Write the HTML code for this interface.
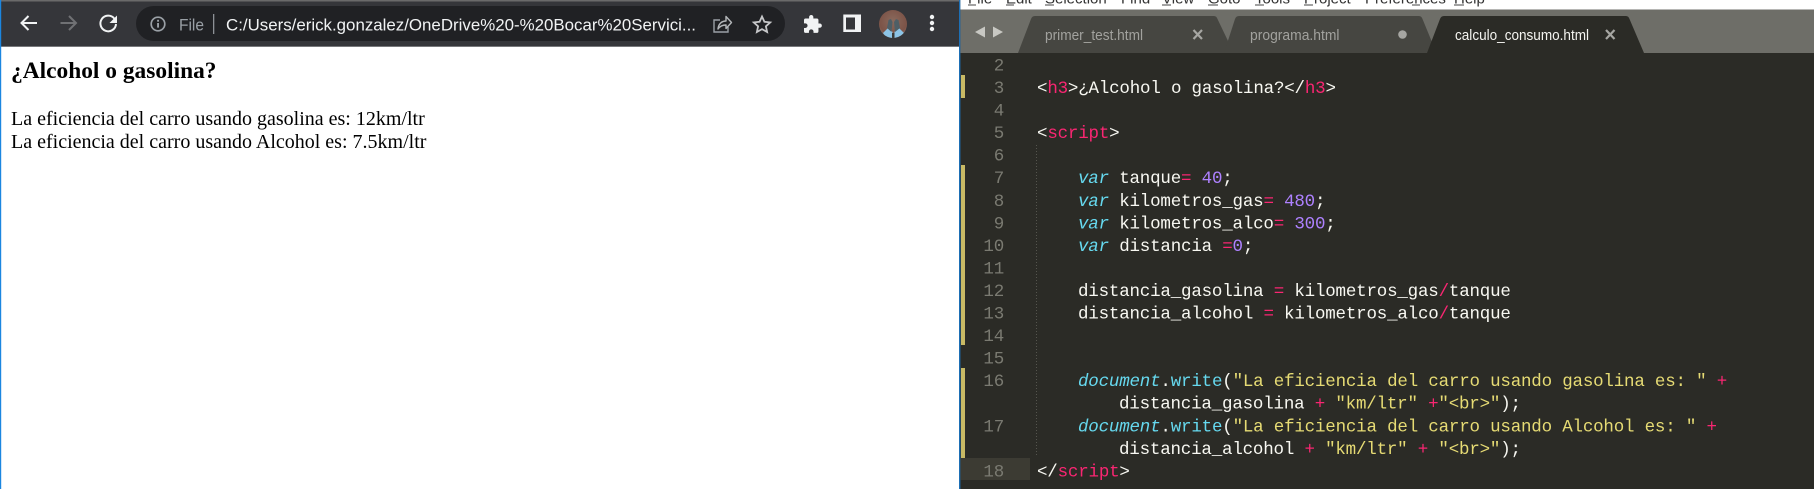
<!DOCTYPE html>
<html><head><meta charset="utf-8"><title>Alcohol o gasolina</title>
<style>
html,body{margin:0;padding:0;width:1814px;height:489px;overflow:hidden;background:#fff}
svg{display:block;position:absolute;left:0;top:0}
text{white-space:pre}
.ui{font-family:"Liberation Sans",sans-serif}
.serif{font-family:"Liberation Serif",serif;fill:#000}
.code{font-family:"Liberation Mono",monospace;font-size:17.5px;letter-spacing:-.2px;fill:#f8f8f2}
.num{font-family:"Liberation Mono",monospace;font-size:17.5px;letter-spacing:-.2px;fill:#7a7a71;text-anchor:end}
.p{fill:#f92672}.k{fill:#66d9ef;font-style:italic}.f{fill:#66d9ef}.n{fill:#ae81ff}.s{fill:#e6db74}
.menu{font-size:15px;fill:#333}
</style></head>
<body>
<svg width="1814" height="489" viewBox="0 0 1814 489" xmlns="http://www.w3.org/2000/svg">
<!-- Chrome window -->
<rect x="0" y="0" width="960" height="489" fill="#fff"/>
<rect x="0" y="0" width="960" height="47" fill="#35363a"/>
<rect x="0" y="0" width="960" height="1.5" fill="#6a6a6a"/>
<rect x="0" y="46" width="960" height="1" fill="#77787b"/>
<rect x="0" y="0" width="1.2" height="489" fill="#1b86e0"/>
<path d="M37 23H21.5M28.5 16L21.500 23l7 7" fill="none" stroke="#f1f3f4" stroke-width="2"/>
<path d="M60.5 23H76M69 16l7 7-7 7" fill="none" stroke="#707174" stroke-width="2"/>
<path d="M114.3 18.6A7.8 7.8 0 1 0 116 24" fill="none" stroke="#f1f3f4" stroke-width="2"/>
<path d="M117 15.5v7.5h-7.5z" fill="#f1f3f4"/>
<rect x="136" y="6" width="649" height="35" rx="17.5" fill="#202124"/>
<circle cx="158" cy="24" r="6.8" fill="none" stroke="#9aa0a6" stroke-width="1.7"/>
<rect x="157.1" y="23" width="1.9" height="4.6" fill="#9aa0a6"/><rect x="157.1" y="19.8" width="1.9" height="1.9" fill="#9aa0a6"/>
<text class="ui" x="179" y="30.5" font-size="16.5" fill="#9aa0a6" textLength="25" lengthAdjust="spacingAndGlyphs">File</text>
<rect x="213" y="14" width="1.3" height="20" fill="#8d9196"/>
<text class="ui" x="226" y="30.5" font-size="16.5" fill="#f1f3f4" textLength="470" lengthAdjust="spacingAndGlyphs">C:/Users/erick.gonzalez/OneDrive%20-%20Bocar%20Servici...</text>
<path d="M720 20h-6v12h14v-5" fill="none" stroke="#9aa0a6" stroke-width="1.4"/>
<path d="M718 29c.5-5 3.5-8 8-8v-4.500l5.500 6-5.500 6v-3.500c-3 0-6 1-8 4z" fill="none" stroke="#b4b7ba" stroke-width="1.4" stroke-linejoin="round"/>
<path d="M762 16.500l2.400 5.300 5.800.6-4.300 3.900 1.200 5.700-5.100-2.900-5.100 2.900 1.200-5.700-4.300-3.900 5.800-.6z" fill="none" stroke="#c6c7c9" stroke-width="1.800"/>
<path transform="translate(802.300 14.200) scale(.85)" d="M20.500 11H19V7a2 2 0 0 0-2-2h-4V3.500a2.500 2.500 0 0 0-5 0V5H4a2 2 0 0 0-2 2v3.800h1.500a2.700 2.700 0 0 1 0 5.400H2V20a2 2 0 0 0 2 2h3.800v-1.500a2.700 2.700 0 0 1 5.400 0V22H17a2 2 0 0 0 2-2v-4h1.500a2.500 2.500 0 0 0 0-5z" fill="#f1f3f4"/>
<rect x="843.300" y="14.500" width="17.700" height="17.500" fill="#f1f3f4"/>
<rect x="846" y="17.500" width="9" height="12" fill="#35363a"/>
<defs><radialGradient id="av" cx=".5" cy=".4" r=".65"><stop offset="0" stop-color="#8a6a5d"/><stop offset=".75" stop-color="#7c5347"/><stop offset="1" stop-color="#8d7a6d"/></radialGradient>
<clipPath id="avc"><circle cx="893" cy="24" r="14"/></clipPath></defs>
<circle cx="893" cy="24" r="14" fill="url(#av)"/>
<g clip-path="url(#avc)">
<path d="M883 33l6-6 3.500 5v6h-6zM894.500 32l3.500-5 6 6-4 5h-5.500z" fill="#8cc4e6"/>
<path d="M887 28l1.500-8 2.500-1 1.500 3-1 10zM895 32l-1-10 2-3 2.500 1 1.500 8z" fill="#4f5f66"/>
<rect x="892" y="33" width="2.500" height="5" fill="#3a3a38"/>
</g>
<circle cx="932" cy="17" r="2.200" fill="#f1f3f4"/><circle cx="932" cy="23" r="2.200" fill="#f1f3f4"/><circle cx="932" cy="29" r="2.200" fill="#f1f3f4"/>

<!-- Rendered page -->
<text class="serif" x="11" y="78" font-size="23.400" font-weight="bold" textLength="205.500">¿Alcohol o gasolina?</text>
<text class="serif" x="11" y="125" font-size="20">La eficiencia del carro usando gasolina es: 12km/ltr</text>
<text class="serif" x="11" y="148" font-size="20">La eficiencia del carro usando Alcohol es: 7.5km/ltr</text>

<!-- Sublime window -->
<rect x="960" y="0" width="854" height="489" fill="#2b2b26"/>
<rect x="959" y="0" width="1.400" height="489" fill="#1d6fb5"/>
<rect x="960.400" y="0" width="854" height="9.500" fill="#fff"/>
<g class="ui menu">
<text x="968" y="3.500">File</text><text x="1006" y="3.500">Edit</text><text x="1045" y="3.500">Selection</text><text x="1121" y="3.500">Find</text><text x="1162" y="3.500">View</text><text x="1208" y="3.500">Goto</text><text x="1255" y="3.500">Tools</text><text x="1304" y="3.500">Project</text><text x="1365" y="3.500">Preferences</text><text x="1454" y="3.500">Help</text>
</g>
<g fill="#444">
<rect x="968" y="4.500" width="8" height="1"/><rect x="1006" y="4.500" width="8" height="1"/><rect x="1045" y="4.500" width="9" height="1"/><rect x="1162" y="4.500" width="9" height="1"/><rect x="1208" y="4.500" width="10" height="1"/><rect x="1255" y="4.500" width="9" height="1"/><rect x="1304" y="4.500" width="9" height="1"/><rect x="1412" y="4.500" width="8" height="1"/><rect x="1454" y="4.500" width="10" height="1"/>
</g>
<rect x="960.400" y="9.500" width="854" height="43.500" fill="#6e6e68"/>
<path d="M975 32l10-5.500v11zM1003 32l-10-5.500v11z" fill="#c8c8c3"/>
<path d="M1018 53L1031 19q1-3 4-3h179q2.500 0 3.500 3L1228 41 1226 53z" fill="#464641"/>
<path d="M1224 53L1235 19q1-3 4-3h180q2.500 0 3.500 3L1434 47l-4 6z" fill="#464641"/>
<path d="M1427 53L1440 19q1-3 4-3h182q2.500 0 3.500 3L1644 53z" fill="#2b2b26"/>
<text class="ui" x="1045" y="40" font-size="15" fill="#a2a29e" textLength="98" lengthAdjust="spacingAndGlyphs">primer_test.html</text>
<text class="ui" x="1250" y="40" font-size="15" fill="#a2a29e" textLength="89.500" lengthAdjust="spacingAndGlyphs">programa.html</text>
<text class="ui" x="1455" y="40" font-size="15" fill="#f4f4f0" textLength="134" lengthAdjust="spacingAndGlyphs">calculo_consumo.html</text>
<path d="M1193.500 30l8.500 9M1202 30l-8.500 9" stroke="#a6a6a2" stroke-width="2.200"/>
<circle cx="1402.500" cy="34.500" r="4.300" fill="#a6a6a2"/>
<path d="M1606 30l8.500 9M1614.500 30l-8.500 9" stroke="#a6a6a2" stroke-width="2.200"/>

<!-- Gutter -->
<rect x="961" y="75" width="4" height="23" fill="#c8b964"/>
<rect x="961" y="165" width="4" height="180" fill="#c8b964"/>
<rect x="961" y="368" width="4" height="90" fill="#c8b964"/>
<rect x="960.400" y="458" width="69.600" height="22" fill="#3c3b33"/>
<line x1="1036.500" y1="145" x2="1036.500" y2="457" stroke="#55554e" stroke-width="1" stroke-dasharray="1 2"/>

<g>
<text class="num" x="1004" y="70.500">2</text>
<text class="num" x="1004" y="93">3</text>
<text class="num" x="1004" y="115.600">4</text>
<text class="num" x="1004" y="138.100">5</text>
<text class="num" x="1004" y="160.700">6</text>
<text class="num" x="1004" y="183.200">7</text>
<text class="num" x="1004" y="205.800">8</text>
<text class="num" x="1004" y="228.300">9</text>
<text class="num" x="1004" y="250.900">10</text>
<text class="num" x="1004" y="273.400">11</text>
<text class="num" x="1004" y="296">12</text>
<text class="num" x="1004" y="318.500">13</text>
<text class="num" x="1004" y="341.100">14</text>
<text class="num" x="1004" y="363.600">15</text>
<text class="num" x="1004" y="386.200">16</text>
<text class="num" x="1004" y="431.300">17</text>
<text class="num" x="1004" y="476.400">18</text>
</g>

<text class="code" x="1037" y="93">&lt;<tspan class="p">h3</tspan>&gt;¿Alcohol o gasolina?&lt;/<tspan class="p">h3</tspan>&gt;</text>
<text class="code" x="1037" y="138.100">&lt;<tspan class="p">script</tspan>&gt;</text>
<text class="code" x="1078" y="183.200"><tspan class="k">var</tspan> tanque<tspan class="p">=</tspan> <tspan class="n">40</tspan>;</text>
<text class="code" x="1078" y="205.800"><tspan class="k">var</tspan> kilometros_gas<tspan class="p">=</tspan> <tspan class="n">480</tspan>;</text>
<text class="code" x="1078" y="228.300"><tspan class="k">var</tspan> kilometros_alco<tspan class="p">=</tspan> <tspan class="n">300</tspan>;</text>
<text class="code" x="1078" y="250.900"><tspan class="k">var</tspan> distancia <tspan class="p">=</tspan><tspan class="n">0</tspan>;</text>
<text class="code" x="1078" y="296">distancia_gasolina <tspan class="p">=</tspan> kilometros_gas<tspan class="p">/</tspan>tanque</text>
<text class="code" x="1078" y="318.500">distancia_alcohol <tspan class="p">=</tspan> kilometros_alco<tspan class="p">/</tspan>tanque</text>
<text class="code" x="1078" y="386.200"><tspan class="k">document</tspan>.<tspan class="f">write</tspan>(<tspan class="s">"La eficiencia del carro usando gasolina es: "</tspan> <tspan class="p">+</tspan></text>
<text class="code" x="1119" y="408.700">distancia_gasolina <tspan class="p">+</tspan> <tspan class="s">"km/ltr"</tspan> <tspan class="p">+</tspan><tspan class="s">"&lt;br&gt;"</tspan>);</text>
<text class="code" x="1078" y="431.300"><tspan class="k">document</tspan>.<tspan class="f">write</tspan>(<tspan class="s">"La eficiencia del carro usando Alcohol es: "</tspan> <tspan class="p">+</tspan></text>
<text class="code" x="1119" y="453.800">distancia_alcohol <tspan class="p">+</tspan> <tspan class="s">"km/ltr"</tspan> <tspan class="p">+</tspan> <tspan class="s">"&lt;br&gt;"</tspan>);</text>
<text class="code" x="1037" y="476.400">&lt;/<tspan class="p">script</tspan>&gt;</text>
</svg>
</body></html>
